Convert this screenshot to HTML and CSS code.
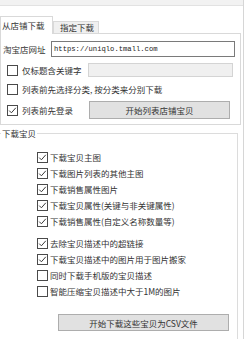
FILE: index.html
```html
<!DOCTYPE html>
<html lang="zh-CN">
<head>
    <meta charset="UTF-8">
    <meta name="viewport" content="width=device-width, initial-scale=1.0">
    <title>淘宝店铺下载</title>
    <link rel="stylesheet" href="styles.css">
</head>
<body>
    <div class="window">
        <div class="top-strip"></div>

        <!-- Tabs -->
        <div class="tabs">
            <div class="tab tab-active">从店铺下载</div>
            <div class="tab">指定下载</div>
        </div>

        <div class="panel">
            <div class="row">
                <span class="field-label">淘宝店网址</span>
                <input class="url-input" type="text" value="https://uniqlo.tmall.com">
            </div>
            <div class="row">
                <label class="check check-wide">
                    <span class="box"></span>
                    <span>仅标题含关键字</span>
                </label>
                <input class="keyword-input" type="text" disabled>
            </div>
            <div class="row">
                <label class="check">
                    <span class="box"></span>
                    <span>列表前先选择分类, 按分类来分别下载</span>
                </label>
            </div>
            <div class="row">
                <label class="check check-btn">
                    <span class="box checked"></span>
                    <span>列表前先登录</span>
                </label>
                <button class="btn btn-list">开始列表店铺宝贝</button>
            </div>
        </div>

        <fieldset class="group">
            <legend>下载宝贝</legend>
            <div class="options">
                <label class="check opt"><span class="box checked"></span><span>下载宝贝主图</span></label>
                <label class="check opt"><span class="box checked"></span><span>下载图片列表的其他主图</span></label>
                <label class="check opt"><span class="box checked"></span><span>下载销售属性图片</span></label>
                <label class="check opt"><span class="box checked"></span><span>下载宝贝属性(关键与非关键属性)</span></label>
                <label class="check opt"><span class="box checked"></span><span>下载销售属性(自定义名称数量等)</span></label>
                <label class="check opt opt-gap"><span class="box checked"></span><span>去除宝贝描述中的超链接</span></label>
                <label class="check opt"><span class="box checked"></span><span>下载宝贝描述中的图片用于图片搬家</span></label>
                <label class="check opt"><span class="box"></span><span>同时下载手机版的宝贝描述</span></label>
                <label class="check opt"><span class="box"></span><span>智能压缩宝贝描述中大于1M的图片</span></label>
            </div>
            <button class="btn btn-csv">开始下载这些宝贝为CSV文件</button>
        </fieldset>
    </div>

    <script>
        // draw the tick inside every checked box
        document.querySelectorAll('.box.checked').forEach(function(box) {
            box.innerHTML = '<svg width="9" height="9" viewBox="0 0 9 9"><polyline points="1.2,4.6 3.4,6.8 7.8,1.8" fill="none" stroke="#3a3a3a" stroke-width="1"/></svg>';
        });
    </script>
</body>
</html>
```

FILE: styles.css
```css
body {
    margin: 0;
    font-family: "Noto Sans CJK SC", "Liberation Sans", sans-serif;
    font-size: 8.5px;
    color: #333333;
    background-color: #ffffff;
    overflow: hidden;
}
.window {
    width: 243px;
    height: 339px;
    border-right: 1px solid #d6d6d6;
    background-color: #ffffff;
    overflow: hidden;
}
.top-strip {
    height: 5px;
    background-color: #f2f2f2;
    border-bottom: 1px solid #e2e2e2;
}
.tabs {
    display: flex;
    align-items: flex-end;
    margin-top: 11px;
    height: 16px;
}
.tab {
    height: 11px;
    line-height: 11px;
    width: 42px;
    padding-left: 2px;
    text-align: center;
    background-color: #f0f0f0;
    border: 1px solid #d9d9d9;
    border-bottom: none;
    box-sizing: content-box;
}
.tab-active {
    position: relative;
    z-index: 1;
    width: 50px;
    height: 17px;
    line-height: 17px;
    margin-bottom: -1px;
    padding-left: 1px;
    text-align: left;
    background-color: #ffffff;
    border-right: 1px solid #d9d9d9;
}
.panel {
    width: 238px;
    border: 1px solid #d9d9d9;
    padding: 7px 0 5px 1px;
    display: flex;
    flex-direction: column;
    gap: 6px;
}
.row {
    display: flex;
    align-items: center;
    min-height: 12px;
}
.field-label {
    width: 48px;
    padding-left: 1px;
}
.url-input {
    width: 184px;
    height: 16px;
    box-sizing: border-box;
    border: 1px solid #7a7a7a;
    padding: 0 2px;
    font-family: "Liberation Mono", monospace;
    font-size: 7.2px;
    color: #222;
    outline: none;
}
.keyword-input {
    width: 145px;
    height: 14px;
    box-sizing: border-box;
    border: 1px solid #d4d4d4;
    background-color: #f0f0f0;
}
.check {
    display: flex;
    align-items: center;
    gap: 4px;
    padding-left: 5px;
    white-space: nowrap;
}
.check-wide {
    width: 81px;
}
.check-btn {
    width: 82px;
}
.box {
    width: 9px;
    height: 9px;
    border: 1px solid #4a4a4a;
    background-color: #ffffff;
    display: flex;
    align-items: center;
    justify-content: center;
    flex-shrink: 0;
}
.btn {
    font-family: "Noto Sans CJK SC", "Liberation Sans", sans-serif;
    font-size: 8.5px;
    color: #333333;
    background-color: #e1e1e1;
    border: 1px solid #adadad;
    padding: 0;
    cursor: pointer;
}
.btn-list {
    width: 141px;
    height: 18px;
}
.group {
    margin: 2px 0 0 0;
    padding: 0 0 10px 37px;
    width: 200px;
    border: 1px solid #dcdcdc;
    border-left: none;
}
.group legend {
    padding: 0 1px;
    margin-left: -36px;
    line-height: 12px;
}
.options {
    display: flex;
    flex-direction: column;
    padding-top: 10px;
}
.opt {
    height: 16px;
    padding-left: 0;
    gap: 2px;
}
.opt-gap {
    margin-top: 6px;
}
.btn-csv {
    display: block;
    margin: 15px 0 0 21px;
    width: 171px;
    height: 17px;
}
```
